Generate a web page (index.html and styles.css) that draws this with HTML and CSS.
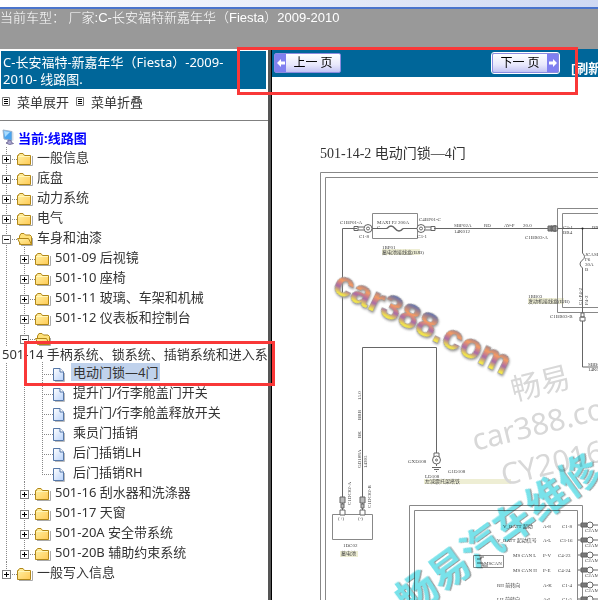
FILE: index.html
```
<!DOCTYPE html>
<html lang="zh-CN">
<head>
  <meta charset="UTF-8">
  <meta name="viewport" content="width=device-width, initial-scale=1.0">
  <title>线路图</title>
  <link rel="stylesheet" href="styles.css">
</head>
<body>

  <svg class="sprite" aria-hidden="true">
    <defs>
      <linearGradient id="gold" x1="0" y1="0" x2="1" y2="1">
        <stop offset="0" stop-color="#fff3a8"/>
        <stop offset="1" stop-color="#ffca55"/>
      </linearGradient>
      <linearGradient id="sheet" x1="0" y1="0" x2="1" y2="1">
        <stop offset="0" stop-color="#ffffff"/>
        <stop offset="1" stop-color="#b9d3fb"/>
      </linearGradient>
    </defs>
    <symbol id="folder" viewBox="0 0 16 16">
      <path d="M2 14.5h13.500V5" fill="none" stroke="#aaa"/>
      <path d="M.5 13.500V4.500h1v-1L3 2.500h3L7.500 4.500h6v9z" fill="url(#gold)" stroke="#b18718"/>
      <path d="M1 5.500h12" stroke="#fff6b8"/>
    </symbol>
    <symbol id="folder-open" viewBox="0 0 16 16">
      <path d="M2.500 13.500V5L4 2.500h3L8.500 4H13l1.500 1.500v8z" fill="#ffe17a" stroke="#b18718"/>
      <path d="M.5 7.500h11l3 6H3.500z" fill="url(#gold)" stroke="#b18718"/>
      <path d="M4 14.500h11.500V7" fill="none" stroke="#aaa"/>
    </symbol>
    <symbol id="page" viewBox="0 0 16 16">
      <path d="M2 15.500h9.500V7" fill="none" stroke="#bbb"/>
      <path d="M.5 2.500H7L10.500 6v8.500H.5z" fill="url(#sheet)" stroke="#5577a8"/>
      <path d="M7 2.500V6h3.500" fill="#fff" stroke="#5577a8"/>
    </symbol>
    <symbol id="computer" viewBox="0 0 14 16">
      <path d="M1 1l9 1.500v9L2 10z" fill="#49a4ef" stroke="#9cb4cc"/>
      <path d="M2 2l6 1-5 5z" fill="#a9dcff"/>
      <path d="M10 2.500l1.500 1v8L10 11.500z" fill="#d4dde6"/>
      <path d="M6 11l3 .5.5 2 2 1-4 1-3.500-1.500L6 13z" fill="#a9a6d0" stroke="#77719c"/>
    </symbol>
    <symbol id="list" viewBox="0 0 8 9">
      <path d="M.5.5h7v8h-7z" fill="#fff" stroke="#777"/>
      <path d="M2 2.500h4M2 4.500h4M2 6.500h4" stroke="#000"/>
    </symbol>
  </svg>

  <div class="topstrip"></div>
  <header class="banner">当前车型： 厂家:C-长安福特新嘉年华（Fiesta）2009-2010</header>

  <div class="frames">
    <nav class="sidebar">
      <h1 class="title">C-长安福特-新嘉年华（Fiesta）-2009-<br>2010- 线路图.</h1>
      <div class="tools">
        <button class="tool"><svg class="ico-list"><use href="#list"/></svg>菜单展开</button>
        <button class="tool"><svg class="ico-list"><use href="#list"/></svg>菜单折叠</button>
      </div>

      <div class="root"><svg class="ico-root"><use href="#computer"/></svg><a href="#">当前:线路图</a></div>
      <ul class="tree">
        <li><div class="row"><span class="joint"><button class="toggle" aria-label="展开"></button></span><svg class="ico"><use href="#folder"/></svg><a href="#">一般信息</a></div></li>
        <li><div class="row"><span class="joint"><button class="toggle" aria-label="展开"></button></span><svg class="ico"><use href="#folder"/></svg><a href="#">底盘</a></div></li>
        <li><div class="row"><span class="joint"><button class="toggle" aria-label="展开"></button></span><svg class="ico"><use href="#folder"/></svg><a href="#">动力系统</a></div></li>
        <li><div class="row"><span class="joint"><button class="toggle" aria-label="展开"></button></span><svg class="ico"><use href="#folder"/></svg><a href="#">电气</a></div></li>
        <li>
          <div class="row"><span class="joint"><button class="toggle open" aria-label="折叠"></button></span><svg class="ico"><use href="#folder-open"/></svg><a href="#">车身和油漆</a></div>
          <ul>
            <li><div class="row"><span class="joint"><button class="toggle" aria-label="展开"></button></span><svg class="ico"><use href="#folder"/></svg><a href="#">501-09 后视镜</a></div></li>
            <li><div class="row"><span class="joint"><button class="toggle" aria-label="展开"></button></span><svg class="ico"><use href="#folder"/></svg><a href="#">501-10 座椅</a></div></li>
            <li><div class="row"><span class="joint"><button class="toggle" aria-label="展开"></button></span><svg class="ico"><use href="#folder"/></svg><a href="#">501-11 玻璃、车架和机械</a></div></li>
            <li><div class="row"><span class="joint"><button class="toggle" aria-label="展开"></button></span><svg class="ico"><use href="#folder"/></svg><a href="#">501-12 仪表板和控制台</a></div></li>
            <li>
              <div class="row"><span class="joint"><button class="toggle open" aria-label="折叠"></button></span><svg class="ico"><use href="#folder-open"/></svg></div>
              <a class="wrapped" href="#">501-14 手柄系统、锁系统、插销系统和进入系</a>
              <ul>
                <li><div class="row"><span class="joint"></span><svg class="ico"><use href="#page"/></svg><a class="selected" href="#">电动门锁—4门</a></div></li>
                <li><div class="row"><span class="joint"></span><svg class="ico"><use href="#page"/></svg><a href="#">提升门/行李舱盖门开关</a></div></li>
                <li><div class="row"><span class="joint"></span><svg class="ico"><use href="#page"/></svg><a href="#">提升门/行李舱盖释放开关</a></div></li>
                <li><div class="row"><span class="joint"></span><svg class="ico"><use href="#page"/></svg><a href="#">乘员门插销</a></div></li>
                <li><div class="row"><span class="joint"></span><svg class="ico"><use href="#page"/></svg><a href="#">后门插销LH</a></div></li>
                <li><div class="row"><span class="joint"></span><svg class="ico"><use href="#page"/></svg><a href="#">后门插销RH</a></div></li>
              </ul>
            </li>
            <li><div class="row"><span class="joint"><button class="toggle" aria-label="展开"></button></span><svg class="ico"><use href="#folder"/></svg><a href="#">501-16 刮水器和洗涤器</a></div></li>
            <li><div class="row"><span class="joint"><button class="toggle" aria-label="展开"></button></span><svg class="ico"><use href="#folder"/></svg><a href="#">501-17 天窗</a></div></li>
            <li><div class="row"><span class="joint"><button class="toggle" aria-label="展开"></button></span><svg class="ico"><use href="#folder"/></svg><a href="#">501-20A 安全带系统</a></div></li>
            <li><div class="row"><span class="joint"><button class="toggle" aria-label="展开"></button></span><svg class="ico"><use href="#folder"/></svg><a href="#">501-20B 辅助约束系统</a></div></li>
          </ul>
        </li>
        <li><div class="row"><span class="joint"><button class="toggle" aria-label="展开"></button></span><svg class="ico"><use href="#folder"/></svg><a href="#">一般写入信息</a></div></li>
      </ul>
    </nav>

    <main class="content">
      <div class="pager">
        <button class="page-btn"><span class="arrow"><svg width="10" height="10" viewBox="0 0 10 10"><path d="M1 5l4-4v2.500h4v3H5V9z" fill="#fff"/></svg></span><span class="page-text">上一 页</span></button>
        <button class="page-btn next"><span class="page-text">下一 页</span><span class="arrow"><svg width="10" height="10" viewBox="0 0 10 10"><path d="M9 5L5 1v2.500H1v3h4V9z" fill="#fff"/></svg></span></button>
        <a class="refresh" href="#">[刷新]</a>
      </div>

      <svg class="diagram" width="600" height="700" viewBox="272 77 600 700">
        <defs>
          <linearGradient id="rainbow" x1="0" y1="0" x2="0" y2="1">
            <stop offset="0.200" stop-color="#5b6fb0"/>
            <stop offset="0.450" stop-color="#f49a62"/>
            <stop offset="0.620" stop-color="#a86aa8"/>
            <stop offset="0.780" stop-color="#f3e64a"/>
          </linearGradient>
          <g id="plug">
            <path d="M-9-2h4v4h-4zM-5-1.500h6M-5 1.500h6" fill="none"/>
            <circle cx="5" cy="0" r="4" fill="#fff"/>
            <circle cx="5" cy="0" r="1.500" fill="#fff"/>
          </g>
          <g id="pin">
            <path d="M-10 0h3M-7-2h6v4h-6z" fill="#777"/>
            <circle cx="2" cy="0" r="3" fill="#fff"/>
            <path d="M5 0h12"/>
          </g>
        </defs>

        <text class="heading" x="320" y="158">501-14-2 电动门锁—4门</text>

        <!-- component name strips -->
        <g fill="#eeeed4">
          <path d="M382 249h38v6h-38zM528 298h36v6h-36zM424 479h87v5h-87zM340 551h18v6h-18z"/>
        </g>

        <!-- sheet frame and module boxes -->
        <g class="box">
          <path d="M900 172.500H320.500V800M900 177.500H325.500V800"/>
          <path d="M372.500 213.500h45v25h-45z"/>
          <path d="M900 208.500H557.500V312.500H900M900 213.500H562.500V307.500H900"/>
          <path d="M409.500 800V505.500H582.500V800M414.500 800V510.500H577.500V800"/>
          <path d="M332.500 514.500h40v25h-40z"/>
          <path d="M473.500 555.500h30v12h-30z"/>
        </g>

        <!-- wires -->
        <g class="wire">
          <path d="M342.500 510V228.500H357M369 228.500h18M403 228.500h18M434 228.500h115M557 228.500h60"/>
          <path d="M387 228.500q4-5 8 0t8 0" stroke-width="1.500"/>
          <path d="M582.500 228.500V253q4 4 0 7-5 4 0 8v99H610"/>
          <path d="M362.500 510V347.500H436.500V466"/>
          <path d="M340 510h5v5h-5zM360 510h5v5h-5z" fill="#fff"/>
          <path d="M340 497h5v6h-5zM360 497h5v6h-5zM341 504h3v4h-3zM361 504h3v4h-3z" fill="#bbb"/>
          <path d="M580 317h5v4h-5zM581 313h3v4h-3z" fill="#fff"/>
          <path d="M434 453h5v4h-5z" fill="#fff"/>
          <circle cx="436.500" cy="460" r="4" fill="#fff"/>
          <circle cx="436.500" cy="460" r="1"/>
          <path d="M432 467.500h9M434 469.500h5M436 471.500h1"/>
          <path d="M477 559h4v-2h3M477 563h6v3h5"/>
          <use href="#plug" transform="translate(363 228.500)"/>
          <use href="#plug" transform="translate(426 228.500) scale(-1 1)"/>
          <path d="M548 226h4v5h-4zM551 226h5v5h-5z" fill="#888"/>
          <circle cx="555" cy="228.500" r="3"/>
          <use href="#pin" x="588" y="525"/>
          <use href="#pin" x="588" y="540"/>
          <use href="#pin" x="588" y="555"/>
          <use href="#pin" x="588" y="570"/>
          <use href="#pin" x="588" y="585"/>
          <use href="#pin" x="588" y="599"/>
        </g>
        <circle cx="582.500" cy="228.500" r="1" fill="#222"/>

        <g class="label">
          <text x="340" y="224">C1BP01-A</text>
          <text x="359" y="238">C1-8</text>
          <text x="377" y="224">MAXI F2 200A</text>
          <text x="377" y="229">C</text>
          <text x="419" y="221">C4BP01-C</text>
          <text x="417" y="238">C3-1</text>
          <text x="382" y="249">1BP01</text>
          <text x="382" y="254">蓄电池接线盒(BJB)</text>
          <text x="454" y="227">SBP02A</text>
          <text x="454" y="233">14K012</text>
          <text x="484" y="227">RD</text>
          <text x="504" y="227">AV-P</text>
          <text x="523" y="227">20.0</text>
          <text x="525" y="239">C1BB03-A</text>
          <text x="563" y="229">C3-1</text>
          <text x="563" y="234">BB4</text>
          <text x="592" y="229">BB1</text>
          <text x="585" y="256">JCASE</text>
          <text x="585" y="261">F6</text>
          <text x="585" y="266">30A</text>
          <text x="585" y="271">B</text>
          <text x="528" y="298">1BB03</text>
          <text x="528" y="303">发动机接线盒(EJB)</text>
          <text x="550" y="318">C1BB03-B</text>
          <text x="588" y="366">SBB06</text>
          <text x="588" y="371">14K01</text>
          <text x="408" y="463">GXD108</text>
          <text x="448" y="473">G1D108</text>
          <text x="425" y="478">LD108</text>
          <text x="425" y="483">左减震托架搭铁</text>
          <text x="338" y="520">(+)</text>
          <text x="358" y="520">(-)</text>
          <text x="343" y="547">1DC02</text>
          <text x="341" y="555">蓄电池</text>
          <text x="503" y="528">V_BATT 起动</text>
          <text x="497" y="542">V_BATT 起动信号</text>
          <text x="513" y="557">MS CAN L</text>
          <text x="513" y="572">MS CAN H</text>
          <text x="497" y="587">RH 前转向</text>
          <text x="497" y="601">LH 前转向</text>
          <text x="543" y="528">A-8</text>
          <text x="562" y="528">C1-8</text>
          <text x="543" y="542">A-L</text>
          <text x="560" y="542">C3-16</text>
          <text x="543" y="557">P-V</text>
          <text x="558" y="557">C4-23</text>
          <text x="543" y="572">P-E</text>
          <text x="558" y="572">C4-24</text>
          <text x="543" y="587">A-K</text>
          <text x="562" y="587">C1-4</text>
          <text x="543" y="601">A-L</text>
          <text x="562" y="601">C1-5</text>
          <text x="585" y="532">C2AM02</text>
          <text x="585" y="547">C2AM02</text>
          <text x="585" y="562">C2AM02</text>
          <text x="585" y="577">C2AM02</text>
          <text x="585" y="592">C2AM02</text>
          <text transform="translate(361 400) rotate(-90)">15.0</text>
          <text transform="translate(361 420) rotate(-90)">BBB</text>
          <text transform="translate(361 438) rotate(-90)">BK</text>
          <text transform="translate(361 468) rotate(-90)">GD108A</text>
          <text transform="translate(367 468) rotate(-90)">14305</text>
          <text transform="translate(351 505) rotate(-90)">C1DC02-A</text>
          <text transform="translate(371 508) rotate(-90)">C1DC02-B</text>
          <text transform="translate(582 305) rotate(-90)">C1-P4-2</text>
          <text transform="translate(588 305) rotate(-90)">P4-2</text>
          <text x="484" y="565">MSCAN</text>
        </g>

        <!-- watermarks -->
        <g class="mark-grey">
          <text transform="translate(514 401) rotate(-14)">畅易</text>
          <text transform="translate(475 451) rotate(-14)">car388.com</text>
          <text transform="translate(504 486) rotate(-14)">CY2016</text>
        </g>
        <text class="mark-color" transform="translate(331 291) rotate(26)">car388.com</text>
        <text class="mark-cyan" transform="translate(409 616) rotate(-36)">畅易汽车维修</text>
      </svg>
    </main>
  </div>

  <div class="callout callout-pager"></div>
  <div class="callout callout-node"></div>

</body>
</html>
```
FILE: styles.css
```
* {
  box-sizing: border-box;
}

body {
  margin: 0;
  height: 100vh;
  display: flex;
  flex-direction: column;
  overflow: hidden;
  background: #fff;
  color: #333;
  font-family: "Noto Sans", "Noto Sans CJK SC", sans-serif;
  font-size: 13px;
}

a {
  color: inherit;
  text-decoration: none;
}

button {
  padding: 0;
  border: none;
  background: none;
  color: inherit;
  font: inherit;
  cursor: pointer;
}

svg {
  flex: none;
}

.sprite {
  position: absolute;
  width: 0;
  height: 0;
}

.topstrip {
  flex: none;
  height: 9px;
  border-bottom: 2px solid #4a74cc;
  background: linear-gradient(to right, #fff, #cfd9f3);
}

.banner {
  flex: none;
  height: 40px;
  background: #999;
  color: #fff;
  font-family: "Liberation Sans", "Noto Sans CJK SC", sans-serif;
  font-weight: 300;
  line-height: 17px;
  white-space: nowrap;
}

.frames {
  flex: 1;
  min-height: 0;
  display: flex;
}

/* left menu */
.sidebar {
  flex: none;
  width: 271px;
  overflow: hidden;
  border-right: 3px solid #555;
}

.title {
  margin: 2px 2px 0 1px;
  padding: 3px 2px;
  height: 38px;
  background: #069;
  color: #fff;
  font-size: 13px;
  font-weight: normal;
  line-height: 17px;
}

.tools {
  display: flex;
  gap: 7px;
  height: 32px;
  padding: 0 2px 6px;
  border-bottom: 1px solid #808080;
}

.tool {
  display: flex;
  align-items: center;
  gap: 7px;
}

.ico-list {
  width: 8px;
  height: 9px;
}

.root {
  display: flex;
  align-items: center;
  gap: 2px;
  height: 20px;
  margin-top: 6px;
  padding-left: 2px;
  color: #00f;
  font-weight: bold;
}

.ico-root {
  width: 14px;
  height: 16px;
}

.tree,
.tree ul {
  margin: 0;
  padding: 0;
  list-style: none;
}

.tree ul {
  padding-left: 18px;
}

.tree li {
  position: relative;
}

.tree li::before {
  content: "";
  position: absolute;
  top: 0;
  bottom: 0;
  left: 6px;
  width: 1px;
  background: repeating-linear-gradient(#888 0 1px, transparent 1px 2px);
}

.tree li:last-child::before {
  bottom: auto;
  height: 12px;
}

.row {
  display: flex;
  align-items: center;
  height: 20px;
  line-height: 18px;
  white-space: nowrap;
}

.joint {
  position: relative;
  display: flex;
  align-items: center;
  width: 17px;
  height: 20px;
  padding: 4px 0 0 2px;
  background: repeating-linear-gradient(to right, #888 0 1px, transparent 1px 2px) 6px 12px / 11px 1px no-repeat;
}

.toggle {
  width: 9px;
  height: 9px;
  border: 1px solid #808080;
  background:
    linear-gradient(#000, #000) center / 5px 1px no-repeat,
    linear-gradient(#000, #000) center / 1px 5px no-repeat,
    #fff;
}

.toggle.open {
  background: linear-gradient(#000, #000) center / 5px 1px no-repeat, #fff;
}

.ico {
  width: 16px;
  height: 16px;
  margin-top: 4px;
  margin-right: 4px;
}

.selected {
  margin-left: -2px;
  padding: 0 2px;
  background: #c0d2ec;
}

.wrapped {
  position: relative;
  display: block;
  height: 15px;
  margin-left: -18px;
  padding-left: 2px;
  background: #fff;
  line-height: 15px;
  white-space: nowrap;
}

/* right frame */
.content {
  flex: 1;
  min-width: 0;
  overflow: hidden;
  border-left: 1px solid #000;
}

.pager {
  display: flex;
  align-items: center;
  height: 28px;
  padding-left: 2px;
  overflow: hidden;
  background: #069;
  white-space: nowrap;
}

.page-btn {
  flex: none;
  display: flex;
  width: 67px;
  height: 20px;
  border: 1px solid #8c8ce0;
  border-radius: 2px;
  background: linear-gradient(#fff, #e8e8fc 60%, #c4c4f4);
  color: #000;
  font-size: 12px;
  line-height: 18px;
}

.next {
  margin-left: 151px;
  outline: 1px solid #fff;
}

.page-text {
  flex: 1;
  text-align: center;
}

.arrow {
  display: flex;
  align-items: center;
  justify-content: center;
  width: 11px;
  height: 18px;
  background: #8080f0;
}

.refresh {
  margin-top: 8px;
  margin-left: 12px;
  color: #fff;
  font-weight: bold;
}

.diagram {
  display: block;
}

.heading {
  fill: #333;
  font-family: "Liberation Serif", "Noto Sans CJK SC", serif;
  font-size: 14px;
}

.box {
  fill: none;
  stroke: #888;
}

.wire {
  fill: none;
  stroke: #666;
}

.label {
  fill: #444;
  font-family: "Liberation Serif", "Noto Sans CJK SC", serif;
  font-size: 5px;
}

.mark-grey {
  fill: #d8d8d8;
  font-size: 30px;
}

.mark-color {
  fill: url(#rainbow);
  stroke: #999;
  stroke-width: 1px;
  paint-order: stroke;
  font-family: "Liberation Sans", sans-serif;
  font-size: 35px;
  font-weight: bold;
  filter: drop-shadow(1px 1px 1px #999);
}

.mark-cyan {
  fill: #78e2ea;
  font-family: "Noto Sans CJK SC", sans-serif;
  font-size: 40px;
  font-weight: bold;
  filter: drop-shadow(1px 1px 0 #999);
  mix-blend-mode: multiply;
}

/* red marker frames over the page */
.callout {
  position: absolute;
  border: 3px solid #f93838;
  pointer-events: none;
}

.callout-pager {
  top: 47px;
  left: 237px;
  width: 341px;
  height: 48px;
}

.callout-node {
  top: 341px;
  left: 24px;
  width: 251px;
  height: 45px;
}
```
